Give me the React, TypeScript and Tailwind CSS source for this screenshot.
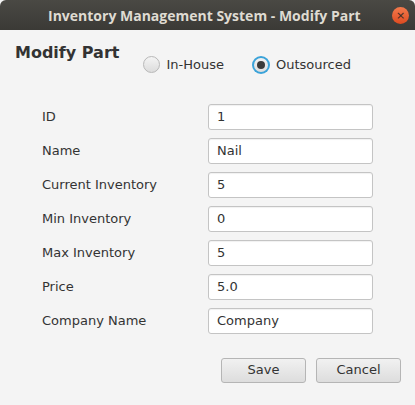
import React from 'react';

const fields: { label: string; value: string }[] = [
    { label: 'ID', value: '1' },
    { label: 'Name', value: 'Nail' },
    { label: 'Current Inventory', value: '5' },
    { label: 'Min Inventory', value: '0' },
    { label: 'Max Inventory', value: '5' },
    { label: 'Price', value: '5.0' },
    { label: 'Company Name', value: 'Company' },
];

const Radio: React.FC<{ label: string; checked?: boolean }> = ({ label, checked }) => (
    <div className="flex items-center gap-[6px]">
        {checked ? (
            <span className="w-[18px] h-[18px] rounded-full bg-[#3ba3d9] flex items-center justify-center">
                <span className="w-[14px] h-[14px] rounded-full bg-gradient-to-b from-[#f2f2f2] to-[#dedede] flex items-center justify-center">
                    <span className="w-[8px] h-[8px] rounded-full bg-[#3a3a3a]" />
                </span>
            </span>
        ) : (
            <span className="w-[17px] h-[17px] rounded-full border border-[#b8b8b8] bg-gradient-to-b from-[#f4f4f4] to-[#dcdcdc]" />
        )}
        <span className="text-[13px] text-[#333]">{label}</span>
    </div>
);

export default function App() {
    return (
        <div className="w-[415px] h-[405px] flex flex-col bg-[#f4f4f4] font-['DejaVu_Sans',sans-serif] overflow-hidden">
            {/* Title bar */}
            <div className="h-[30px] shrink-0 flex items-center bg-gradient-to-b from-[#4a4944] to-[#3b3a36] rounded-t-[6px]">
                <div className="flex-1 pl-[48px] whitespace-nowrap font-['Open_Sans',sans-serif] text-[14px] font-bold text-[#dfdbd2]">
                    Inventory Management System - Modify Part
                </div>
                <div className="w-[17px] h-[17px] mr-[6px] shrink-0 rounded-full bg-gradient-to-b from-[#f37a4c] to-[#dd4a1f] flex items-center justify-center text-[#3b2a24] text-[11px] leading-none">
                    ×
                </div>
            </div>

            {/* Header */}
            <div className="flex items-start pl-[15px] pt-[13px]">
                <div className="text-[16px] font-bold text-[#333] leading-[20px]">Modify Part</div>
                <div className="flex items-center gap-[28px] ml-[24px] mt-[12px]">
                    <Radio label="In-House" />
                    <Radio label="Outsourced" checked />
                </div>
            </div>

            {/* Form */}
            <div className="flex flex-col gap-[8px] mt-[29px] pl-[42px]">
                {fields.map((f) => (
                    <div key={f.label} className="flex items-center h-[26px]">
                        <div className="w-[166px] text-[13px] text-[#333]">{f.label}</div>
                        <div className="w-[165px] h-[26px] rounded-[3px] border border-[#c4c4c4] bg-white shadow-[inset_0_1px_1px_rgba(0,0,0,0.06)] flex items-center pl-[8px] text-[13px] text-[#333]">
                            {f.value}
                        </div>
                    </div>
                ))}
            </div>

            {/* Buttons */}
            <div className="flex justify-end gap-[10px] mt-[24px] pr-[14px]">
                {['Save', 'Cancel'].map((b) => (
                    <div
                        key={b}
                        className="w-[85px] h-[25px] rounded-[3px] border border-[#b5b5b5] bg-gradient-to-b from-[#f1f1f1] to-[#dddddd] flex items-center justify-center text-[13px] text-[#333]"
                    >
                        {b}
                    </div>
                ))}
            </div>
        </div>
    );
}
